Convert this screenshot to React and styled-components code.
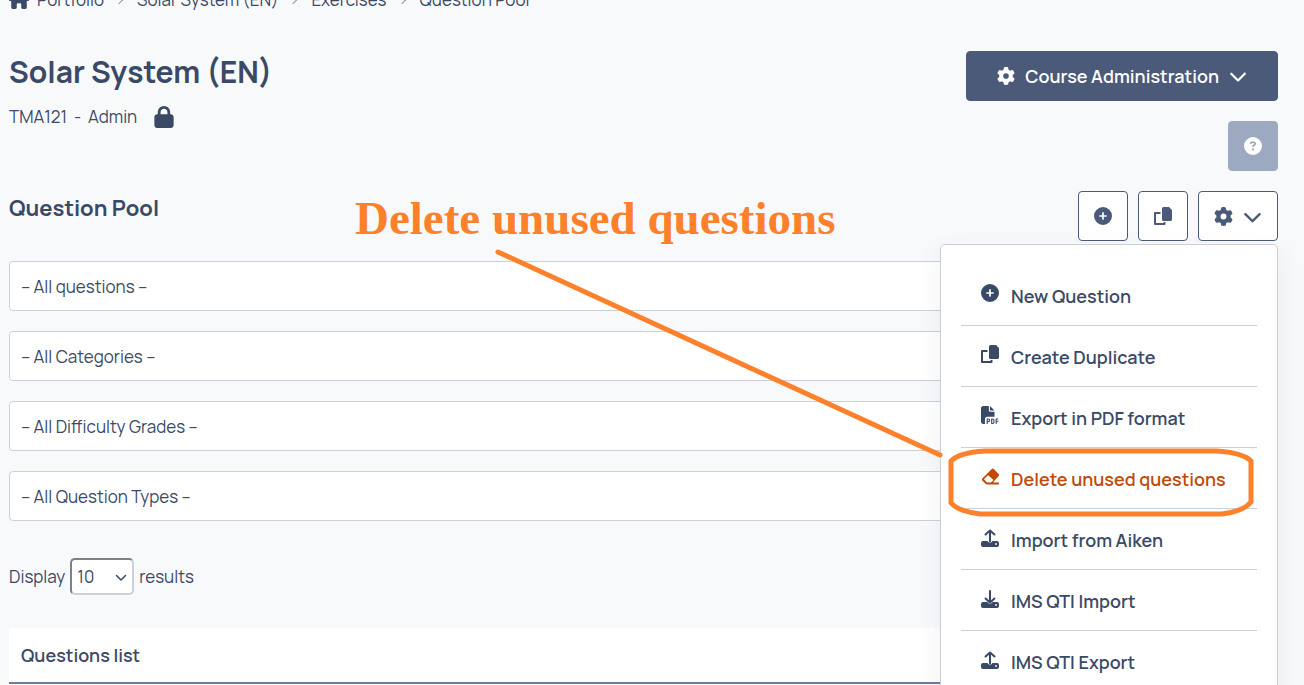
import styled, { createGlobalStyle } from "styled-components";
import {
  FaChevronDown,
  FaCircleQuestion,
  FaCirclePlus,
  FaFilePdf,
  FaGear,
  FaHouse,
  FaLock,
} from "react-icons/fa6";

const GlobalStyle = createGlobalStyle`
  * {
    box-sizing: border-box;
  }

  body {
    margin: 0;
    background-color: #f8f9fb;
    color: #3a4a66;
    font-family: Manrope, Inter, "Liberation Sans", sans-serif;
    font-size: 17px;
    line-height: 24px;
  }

  button, select {
    font: inherit;
    color: inherit;
  }
`;

const Page = styled.main`
  position: relative;
  height: 100vh;
  overflow: hidden;
  padding: 0 26px 0 9px;
`;

const Breadcrumb = styled.nav`
  margin-top: -12px;

  ol {
    display: flex;
    margin: 0;
    padding: 0;
    list-style: none;
  }

  li {
    display: flex;
    align-items: center;
  }

  li + li::before {
    content: "";
    width: 5px;
    height: 5px;
    margin: 0 15px 0 12px;
    border: solid #8d97a8;
    border-width: 1px 1px 0 0;
    transform: rotate(45deg);
  }

  a {
    display: flex;
    align-items: center;
    gap: 8px;
    color: inherit;
    text-decoration: none;
  }
`;

const Header = styled.header`
  display: flex;
  justify-content: space-between;
  align-items: flex-start;
  margin-top: 39px;

  h1 {
    margin: 0;
    font-size: 30px;
    font-weight: 700;
    line-height: 42px;
  }

  p {
    display: flex;
    align-items: center;
    gap: 16px;
    margin: 12px 0 0;
  }
`;

const Side = styled.div`
  display: flex;
  flex-direction: column;
  align-items: flex-end;
  gap: 20px;
`;

const Button = styled.button`
  display: flex;
  align-items: center;
  justify-content: center;
  gap: 10px;
  min-width: 50px;
  height: 50px;
  padding: 0 ${({ $wide }) => ($wide ? "30px" : "15px")};
  border: 1px solid ${({ $color }) => $color || "#4b5a78"};
  border-radius: 4px;
  background-color: ${({ $color }) => $color || "#fff"};
  color: ${({ $color }) => ($color ? "#fff" : "#4b5a78")};
  font-size: 18px;
  font-weight: 600;
  cursor: pointer;
`;

const Toolbar = styled.div`
  display: flex;
  justify-content: space-between;
  align-items: flex-start;
  margin-top: 20px;

  h2 {
    margin: 0;
    font-size: 22px;
    font-weight: 700;
    line-height: 34px;
  }
`;

const Actions = styled.div`
  position: relative;
  display: flex;
  gap: 10px;
`;

const Menu = styled.ul`
  position: absolute;
  top: 53px;
  right: 0;
  z-index: 1;
  width: 338px;
  margin: 0;
  padding: 20px;
  border: 1px solid #cbd0d8;
  border-radius: 5px;
  background-color: #fff;
  box-shadow: 0 8px 24px rgba(50, 70, 110, 0.08);
  list-style: none;

  li {
    border-bottom: 1px solid #cbd0d8;
  }
`;

const MenuLink = styled.a`
  display: flex;
  align-items: flex-start;
  gap: 12px;
  padding: 19px 20px 17px;
  color: ${({ $danger }) => ($danger ? "#c04a08" : "#3a4a66")};
  font-size: 18px;
  font-weight: 600;
  text-decoration: none;
`;

const Filters = styled.form`
  display: grid;
  gap: 20px;
  margin-top: 20px;
`;

const Select = styled.select`
  appearance: none;
  width: 100%;
  height: 50px;
  padding: 2px 11px 0;
  border: 1px solid #cbd0d8;
  border-radius: 4px;
  background-color: #fff;
`;

const Display = styled.label`
  display: flex;
  align-items: center;
  gap: 5px;
  margin-top: 37px;
`;

const SizeBox = styled.span`
  display: grid;
  align-items: center;

  select, svg {
    grid-area: 1 / 1;
  }

  select {
    appearance: none;
    width: 64px;
    height: 37px;
    padding: 0 5px;
    border: 2px inset #cbd0dc;
    border-radius: 5px;
    background-color: #fff;
  }

  svg {
    justify-self: end;
    margin-right: 7px;
    pointer-events: none;
  }
`;

const Table = styled.table`
  width: 100%;
  margin-top: 33px;
  border-collapse: collapse;
  background-color: #fff;

  th {
    height: 55px;
    padding: 0 12px;
    border-bottom: 2px solid #6c7d9c;
    font-size: 18px;
    font-weight: 600;
    text-align: left;
  }
`;

const Annotation = styled.strong`
  position: absolute;
  top: 192px;
  left: 355px;
  color: #fd812b;
  font-family: "Liberation Serif", serif;
  font-size: 47px;
  line-height: 52px;
  white-space: nowrap;
`;

const Pointer = styled.svg`
  position: absolute;
  top: 0;
  right: 0;
  z-index: 2;
  pointer-events: none;
`;

const TransferIcon = ({ down }) => (
  <svg width="18" height="19" viewBox="0 0 18 19" fill="none" aria-hidden="true">
    <path d="M2 13h4.500a2.700 2.700 0 0 0 5 0H16a2 2 0 0 1 2 2v2a2 2 0 0 1-2 2H2a2 2 0 0 1-2-2v-2a2 2 0 0 1 2-2z" fill="currentColor" />
    <circle cx="15" cy="16" r="0.900" fill="#fff" />
    <path
      d={down ? "M9 2v11M4.500 9.500L9 13.500 13.500 9.500" : "M9 13.500V3M4.500 6.500L9 2.500 13.500 6.500"}
      stroke="currentColor"
      strokeWidth="2"
      strokeLinecap="round"
      strokeLinejoin="round"
    />
  </svg>
);

const CopyIcon = () => (
  <svg width="18" height="18" viewBox="0 0 18 18" fill="none" aria-hidden="true">
    <path d="M6.500 6H1v11h9.500v-2" stroke="currentColor" strokeWidth="2" strokeLinejoin="round" />
    <path d="M9.500 0H15l3 3v9.500a1.500 1.500 0 0 1-1.500 1.500h-7A1.500 1.500 0 0 1 8 12.500v-11A1.500 1.500 0 0 1 9.500 0z" fill="currentColor" />
  </svg>
);

const EraserIcon = () => (
  <svg width="18" height="18" viewBox="0 0 18 18" fill="none" aria-hidden="true">
    <path
      fillRule="evenodd"
      d="M10.500 2.200a1.800 1.800 0 0 1 2.500 0l4.500 4.500a1.800 1.800 0 0 1 0 2.500L12.500 14.800V15.500H17.500a1 1 0 0 1 0 2H6.500a3 3 0 0 1-2-.8L1.500 13.800a1.800 1.800 0 0 1 0-2.500zM7 8.300L3 12.300l2.600 2.700q.5.500 1.100.5h3.200l2.600-2.400z"
      fill="currentColor"
    />
  </svg>
);

const filters = [
  { label: "Questions", value: "– All questions –" },
  { label: "Category", value: "– All Categories –" },
  { label: "Difficulty", value: "– All Difficulty Grades –" },
  { label: "Type", value: "– All Question Types –" },
];

const menuItems = [
  { text: "New Question", icon: <FaCirclePlus size={18} /> },
  { text: "Create Duplicate", icon: <CopyIcon /> },
  { text: "Export in PDF format", icon: <FaFilePdf size={18} /> },
  { text: "Delete unused questions", icon: <EraserIcon />, danger: true },
  { text: "Import from Aiken", icon: <TransferIcon /> },
  { text: "IMS QTI Import", icon: <TransferIcon down /> },
  { text: "IMS QTI Export", icon: <TransferIcon /> },
];

const App = () => {
  return (
    <Page>
      <GlobalStyle />
      <Breadcrumb aria-label="Breadcrumb">
        <ol>
          <li><a href="#portfolio"><FaHouse size={20} />Portfolio</a></li>
          <li><a href="#course">Solar System (EN)</a></li>
          <li><a href="#exercises">Exercises</a></li>
          <li>Question Pool</li>
        </ol>
      </Breadcrumb>

      <Header>
        <div>
          <h1>Solar System (EN)</h1>
          <p>TMA121&nbsp; -&nbsp; Admin <FaLock size={22} /></p>
        </div>
        <Side>
          <Button type="button" $wide $color="#4b5a78">
            <FaGear size={18} />
            Course Administration
            <FaChevronDown size={18} />
          </Button>
          <Button type="button" $color="#9ca9c1" aria-label="Help">
            <FaCircleQuestion size={18} />
          </Button>
        </Side>
      </Header>

      <Toolbar>
        <h2>Question Pool</h2>
        <Actions>
          <Button type="button" aria-label="New Question"><FaCirclePlus size={18} /></Button>
          <Button type="button" aria-label="Create Duplicate"><CopyIcon /></Button>
          <Button type="button" aria-label="Options">
            <FaGear size={19} />
            <FaChevronDown size={19} />
          </Button>
          <Menu>
            {menuItems.map(({ text, icon, danger }) => (
              <li key={text}>
                <MenuLink href="#menu" $danger={danger}>{icon}{text}</MenuLink>
              </li>
            ))}
          </Menu>
        </Actions>
      </Toolbar>

      <Filters>
        {filters.map(({ label, value }) => (
          <Select key={label} aria-label={label}>
            <option>{value}</option>
          </Select>
        ))}
      </Filters>

      <Display>
        Display
        <SizeBox>
          <select defaultValue="10">
            <option>10</option>
            <option>25</option>
          </select>
          <FaChevronDown size={12} />
        </SizeBox>
        results
      </Display>

      <Table>
        <thead>
          <tr><th scope="col">Questions list</th></tr>
        </thead>
      </Table>

      <Annotation>Delete unused questions</Annotation>
      <Pointer width="820" height="530" viewBox="484 0 820 530" fill="none" stroke="#fd812b" strokeLinecap="round" aria-hidden="true">
        <path d="M498 252L940 455" strokeWidth="5" />
        <path d="M985 451H1216C1234 452 1246 456 1251 461V502C1246 508 1238 512 1222 514H980C965 512 956 509 951 503V461C956 456 966 452 985 451Z" strokeWidth="5" strokeLinejoin="round" />
      </Pointer>
    </Page>
  );
};

export default App;
